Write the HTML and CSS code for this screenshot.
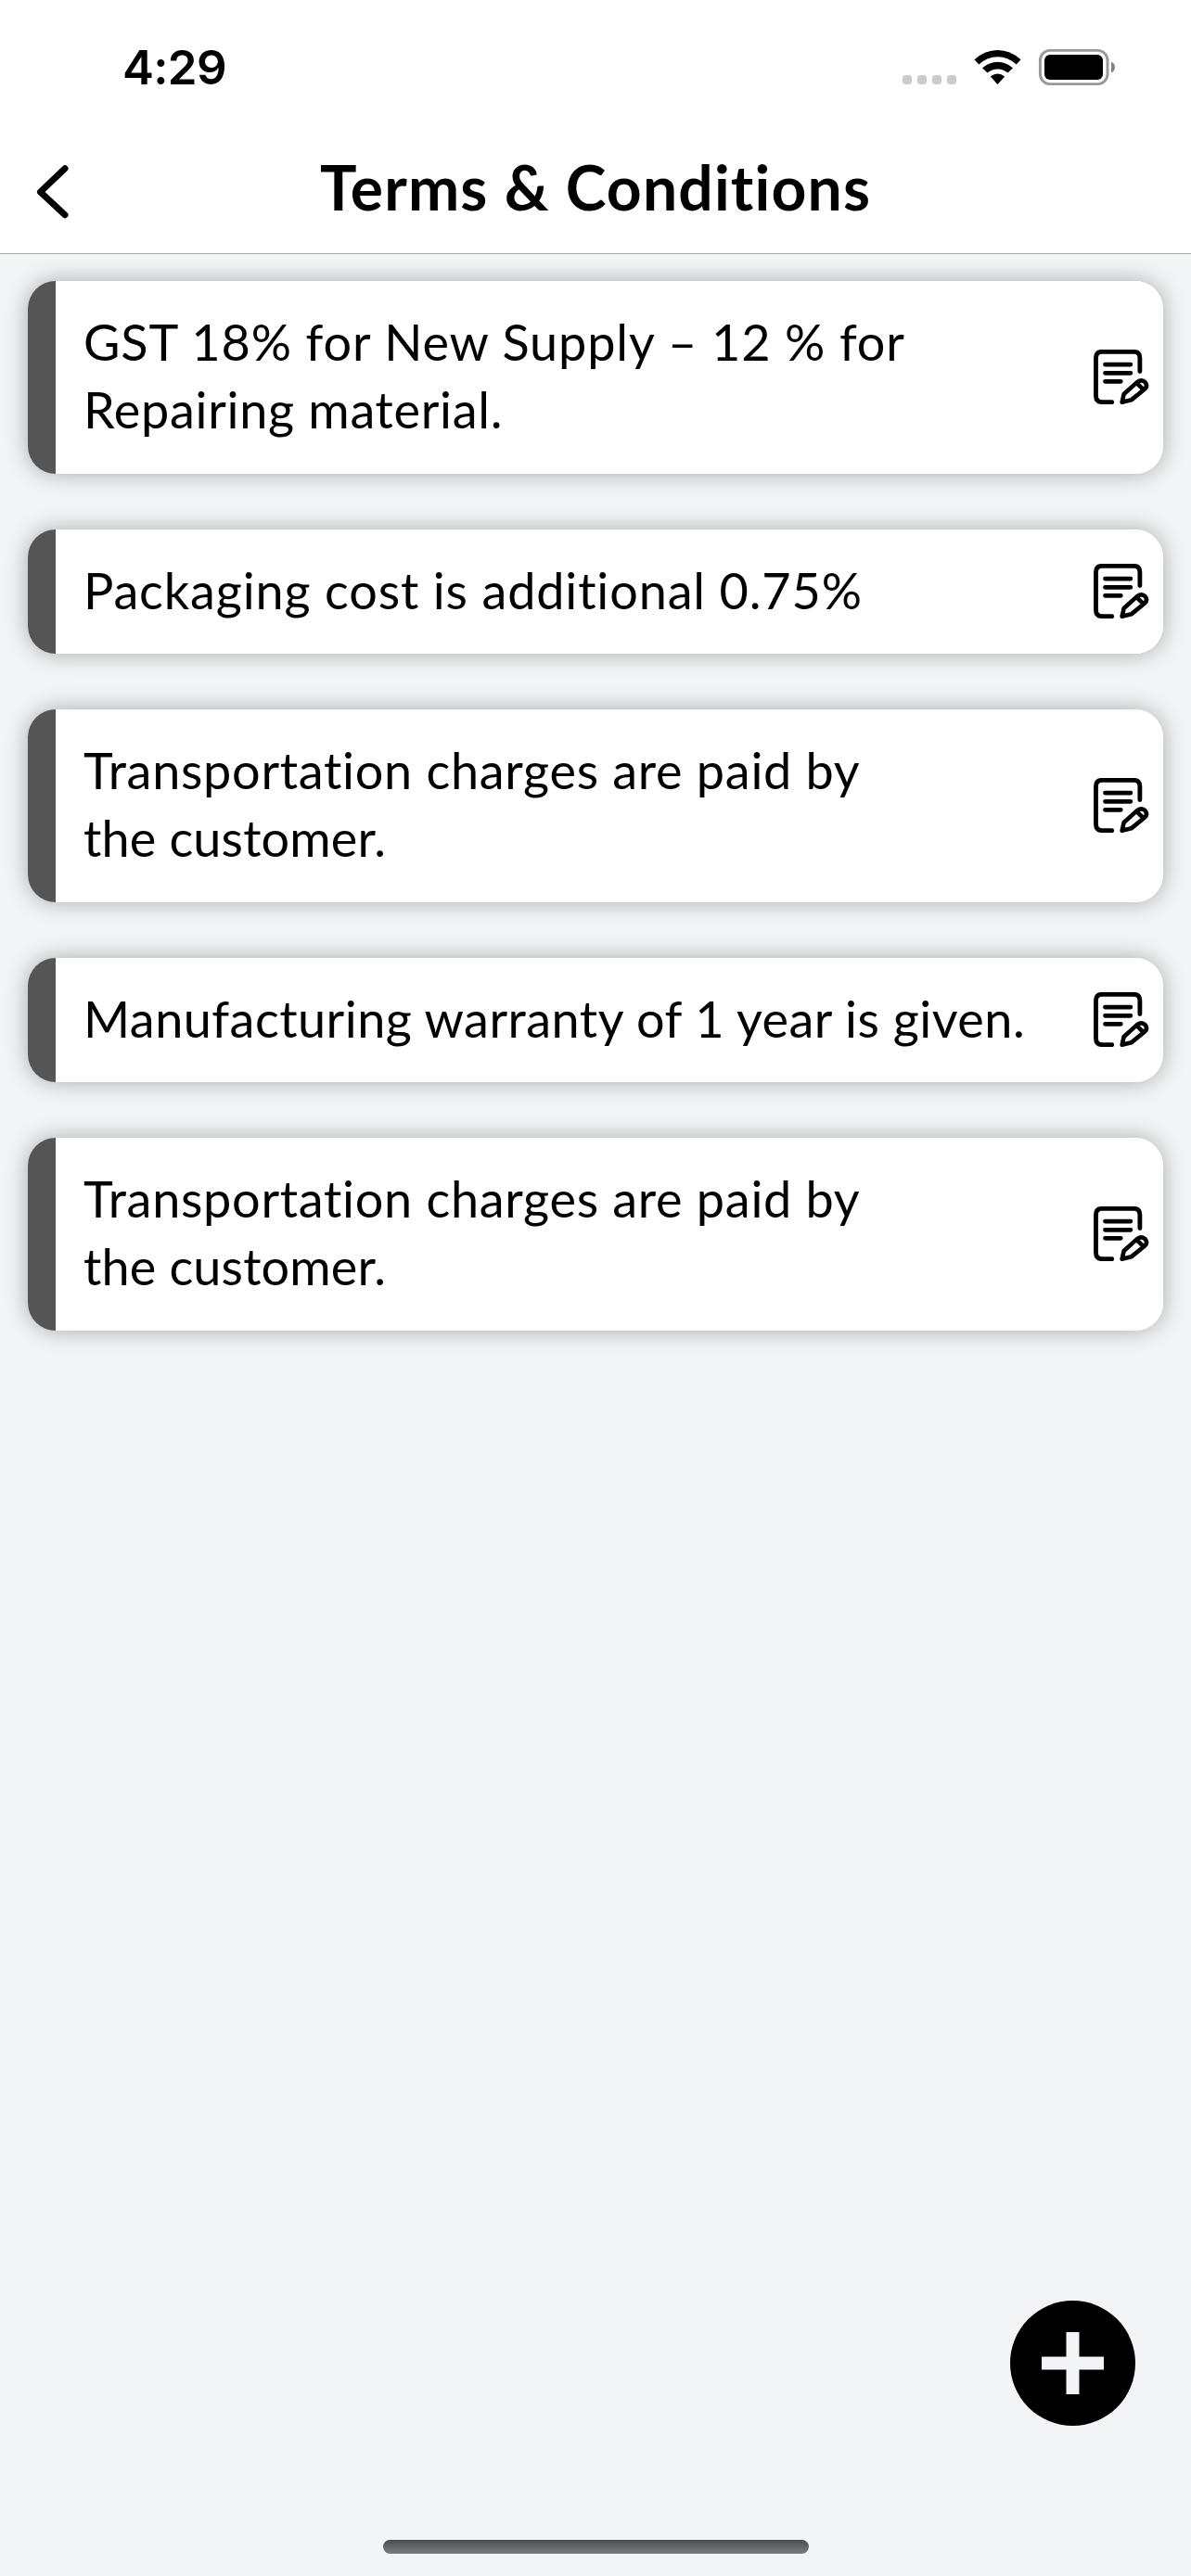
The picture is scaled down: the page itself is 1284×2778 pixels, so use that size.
FILE: index.html
```html
<!DOCTYPE html>
<html lang="en">
<head>
<meta charset="utf-8">
<title>Terms &amp; Conditions</title>
<link rel="stylesheet" href="styles.css">
</head>
<body>
<svg class="sprite" width="0" height="0" aria-hidden="true">
  <symbol id="edit" viewBox="87 81 180 178">
    <g fill="none" stroke="#000" stroke-linecap="round" stroke-linejoin="round">
      <path stroke-width="14.5" d="M237 152V108Q237 88 217 88H114Q94 88 94 108V231Q94 252 115 252H146"/>
      <path stroke-width="14" d="M124 129.500H207M124 157.500H207M124 184.500H175"/>
      <path stroke-width="14" d="M179 252L185 226L228 187Q243 176 254 187Q264 199 252 210L209 245ZM226 189L249 212"/>
    </g>
  </symbol>
</svg>
<div class="screen">
  <div class="status">
    <span class="time">4:29</span>
    <svg class="indicators" width="230" height="40" viewBox="970 52 230 40">
      <g fill="#cbcbcb"><rect x="973" y="81" width="10" height="10" rx="3.500"/><rect x="989" y="81" width="10" height="10" rx="3.500"/><rect x="1005" y="81" width="10" height="10" rx="3.500"/><rect x="1021" y="81" width="10" height="10" rx="3.500"/></g>
      <path d="M1050.500 64.200Q1062 54 1075.500 54T1100.500 64.200L1095.700 69.500Q1086.500 61.300 1075.500 61.300T1055.300 69.500ZM1059 73.200Q1066.500 66.700 1075.500 66.700T1092 73.200L1086.500 78.600Q1081.500 74.400 1075.500 74.400T1064.500 78.600ZM1067.800 82.600Q1075.500 76.500 1083.200 82.600L1075.500 91Z"/>
      <rect x="1121.400" y="54.400" width="72.600" height="36.200" rx="10.500" fill="none" stroke="#999" stroke-width="2.900"/>
      <rect x="1126" y="59" width="63" height="27" rx="6"/>
      <path fill="#858585" d="M1198 66.500Q1202 68.500 1202 72.500T1198 78.500Z"/>
    </svg>
  </div>
  <header class="header">
    <svg class="back" width="37" height="61" viewBox="38 176 37 61"><path d="M70 181.700L43.500 207L70 231.700" fill="none" stroke="#000" stroke-width="7" stroke-linecap="round" stroke-linejoin="round"/></svg>
    <h1 class="title">Terms &amp; Conditions</h1>
  </header>
  <main class="list">
    <article class="card tall"><p class="text"><span class="gst">GST 18% for New Supply – 12 % for</span><br><span class="repair">Repairing material.</span></p><svg class="edit"><use href="#edit"/></svg></article>
    <article class="card"><p class="text"><span class="packaging">Packaging cost is additional 0.75%</span></p><svg class="edit"><use href="#edit"/></svg></article>
    <article class="card tall"><p class="text"><span class="transport">Transportation charges are paid by</span><br><span class="customer">the customer.</span></p><svg class="edit"><use href="#edit"/></svg></article>
    <article class="card"><p class="text"><span class="warranty">Manufacturing warranty of 1 year is given.</span></p><svg class="edit"><use href="#edit"/></svg></article>
    <article class="card tall"><p class="text"><span class="transport">Transportation charges are paid by</span><br><span class="customer">the customer.</span></p><svg class="edit"><use href="#edit"/></svg></article>
  </main>
  <svg class="add" width="135" height="135" viewBox="0 0 135 135"><circle cx="67.500" cy="67.500" r="67.500"/><path fill="#f3f4f6" d="M60.500 34H74.500V60.500H101V74.500H74.500V101H60.500V74.500H34V60.500H60.500Z"/></svg>
  <footer class="home"></footer>
</div>
</body>
</html>
```
FILE: styles.css
```css
* { box-sizing: border-box; }
body { margin: 0; background: #f3f4f6; color: #000; }
.sprite { position: absolute; }
.screen {
  position: relative;
  display: flex;
  flex-direction: column;
  width: 1284px;
  height: 2778px;
  overflow: hidden;
}
.status {
  display: flex;
  justify-content: space-between;
  align-items: center;
  height: 141px;
  padding: 4px 81px 0 132px;
  background: #fff;
}
.time { font: 600 51px/60px Inter, sans-serif; letter-spacing: -0.7px; }
.indicators { overflow: visible; margin: 0 3px 1px 0; }
.header {
  display: grid;
  grid-template-columns: 37px 1fr 37px;
  align-items: center;
  height: 133px;
  padding: 0 38px;
  border-bottom: 1px solid #a7a9ac;
  background: #fff;
}
.back { margin-bottom: 2px; }
.title {
  margin: 0;
  padding-bottom: 11px;
  text-align: center;
  white-space: nowrap;
  font: 700 66px/80px Lato, sans-serif;
  font-variant-ligatures: none;
  letter-spacing: 1.15px;
}
.list {
  flex: 1;
  display: flex;
  flex-direction: column;
  gap: 60px;
  padding: 29px 30px 0;
}
.card {
  display: flex;
  align-items: center;
  justify-content: space-between;
  height: 134px;
  padding: 0 15px 0 30px;
  border-radius: 30px;
  background: linear-gradient(90deg, #555 30px, #fff 30px);
  box-shadow: 0 0 24px rgba(0, 0, 0, 0.31);
}
.tall { height: 208px; }
.text {
  margin: 0;
  padding: 0 0 4px 30px;
  white-space: nowrap;
  font: 400 54px/73px Lato, sans-serif;
  font-variant-ligatures: none;
}
.gst { letter-spacing: 0.88px; }
.repair { letter-spacing: 0.7px; }
.packaging { letter-spacing: 0.85px; }
.transport { letter-spacing: 0.71px; }
.customer { letter-spacing: 0.15px; }
.warranty { letter-spacing: 0.48px; }
.edit { width: 60px; height: 59px; flex: none; margin-bottom: 1px; }
.add { position: absolute; left: 1089px; top: 2481px; }
.home {
  width: 459px;
  height: 15px;
  margin: 0 auto 24px;
  border-radius: 8px;
  background: linear-gradient(#4b4d4d, #7b7c7e);
}
```
